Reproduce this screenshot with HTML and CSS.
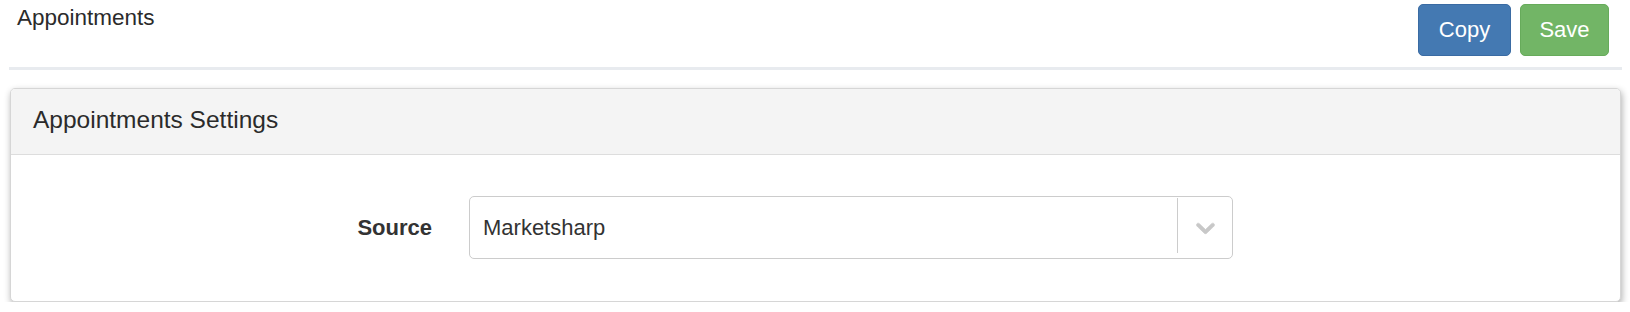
FILE: index.html
```html
<!DOCTYPE html>
<html lang="en">
<head>
<meta charset="utf-8">
<title>Appointments</title>
<link rel="stylesheet" href="styles.css">
</head>
<body>
<div class="page">
  <div class="topbar">
    <h1 class="page-title">Appointments</h1>
    <div class="actions">
      <button class="btn btn-copy" type="button">Copy</button>
      <button class="btn btn-save" type="button">Save</button>
    </div>
  </div>
  <div class="divider"></div>
  <section class="panel">
    <div class="panel-heading">Appointments Settings</div>
    <div class="panel-body">
      <div class="form-row">
        <label class="form-label">Source</label>
        <div class="select">
          <div class="select-value">Marketsharp</div>
          <span class="select-sep"></span>
          <div class="select-indicator">
            <svg width="31" height="31" viewBox="0 0 20 20" aria-hidden="true"><path fill="#c8c8c8" stroke="#c8c8c8" stroke-width="0.4" d="M4.516 7.548c0.436-0.446 1.043-0.481 1.576 0l3.908 3.747 3.908-3.747c0.533-0.481 1.141-0.446 1.574 0 0.436 0.445 0.408 1.197 0 1.615-0.406 0.418-4.695 4.502-4.695 4.502-0.217 0.223-0.502 0.335-0.787 0.335s-0.57-0.112-0.789-0.335c0 0-4.287-4.084-4.695-4.502s-0.436-1.17 0-1.615z"/></svg>
          </div>
        </div>
      </div>
    </div>
  </section>
</div>
</body>
</html>
```
FILE: styles.css
```css
* { box-sizing: border-box; }
html, body { margin: 0; padding: 0; background: #fff; }
body {
  font-family: "Liberation Sans", Arial, Helvetica, sans-serif;
  color: #333;
}
.page {
  padding: 0 8px 0 9px;
}
.topbar {
  display: flex;
  justify-content: space-between;
  align-items: flex-start;
  padding: 4px 13px 0 8px;
}
.page-title {
  margin: 1px 0 0;
  font-size: 22.5px;
  line-height: 26px;
  font-weight: normal;
  color: #2b2b2b;
}
.actions {
  display: flex;
  gap: 9px;
}
.btn {
  height: 52px;
  border: 1px solid transparent;
  border-radius: 5px;
  font-family: inherit;
  font-size: 22px;
  color: #fff;
  padding: 0;
  display: flex;
  align-items: center;
  justify-content: center;
}
.btn-copy {
  width: 93px;
  background: #4479b2;
  border-color: #3a6ba3;
}
.btn-save {
  width: 89px;
  background: #72b566;
  border-color: #67ab5b;
}
.divider {
  margin-top: 11px;
  height: 3px;
  background: #e8ebef;
}
.panel {
  margin: 18px 1px 0;
  border: 1px solid #d6d6d6;
  border-radius: 5px;
  background: #fff;
  box-shadow: 1px 3px 7px rgba(0, 0, 0, 0.32);
}
.panel-heading {
  background: #f4f4f4;
  border-bottom: 1px solid #dddddd;
  border-radius: 4px 4px 0 0;
  padding: 17px 22px 20px;
  font-size: 24.5px;
  line-height: 28px;
  color: #2b2b2b;
}
.panel-body {
  padding: 41px 0 42px;
}
.form-row {
  display: flex;
  align-items: center;
  gap: 37px;
}
.form-label {
  width: 421px;
  text-align: right;
  font-weight: bold;
  font-size: 22px;
  color: #333;
}
.select {
  width: 764px;
  height: 63px;
  border: 1px solid #cccccc;
  border-radius: 5px;
  display: flex;
  align-items: stretch;
  background: #fff;
}
.select-value {
  flex: 1;
  display: flex;
  align-items: center;
  padding-left: 13px;
  font-size: 22px;
  color: #333;
}
.select-sep {
  width: 1px;
  background: #cccccc;
  margin: 1px 0 5px;
}
.select-indicator {
  width: 54px;
  display: flex;
  align-items: center;
  justify-content: center;
}
.select-indicator svg { display: block; }
```
